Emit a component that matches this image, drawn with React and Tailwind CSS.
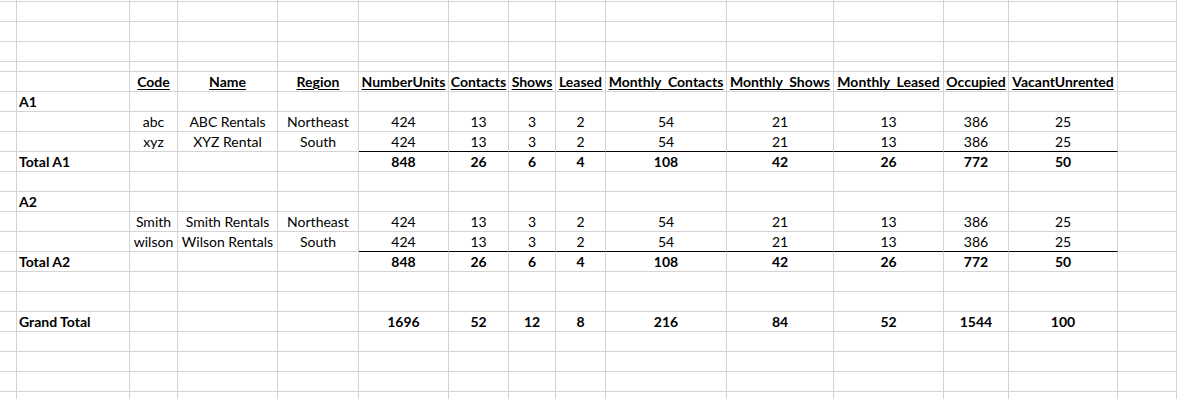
const GRID = 'grid grid-cols-[17px_113px_48px_100px_81px_90px_60px_47px_50px_121px_107px_110px_65px_109px_1fr]'

const HEAD = ['Code', 'Name', 'Region', 'NumberUnits', 'Contacts', 'Shows', 'Leased', 'Monthly  Contacts', 'Monthly  Shows', 'Monthly  Leased', 'Occupied', 'VacantUnrented']

// kind: blank | head | label | data | total
const ROWS = [
  { h: 'h-[2px]' },
  { h: 'h-[20px]' },
  { h: 'h-[20px]' },
  { h: 'h-[20px]' },
  { h: 'h-[10px]' },
  { h: 'h-[20px]', kind: 'head' },
  { h: 'h-[20px]', kind: 'label', label: 'A1' },
  { h: 'h-[20px]', kind: 'data', vals: ['abc', 'ABC Rentals', 'Northeast', 424, 13, 3, 2, 54, 21, 13, 386, 25] },
  { h: 'h-[20px]', kind: 'data', line: true, vals: ['xyz', 'XYZ Rental', 'South', 424, 13, 3, 2, 54, 21, 13, 386, 25] },
  { h: 'h-[20px]', kind: 'total', label: 'Total A1', vals: [848, 26, 6, 4, 108, 42, 26, 772, 50] },
  { h: 'h-[20px]' },
  { h: 'h-[20px]', kind: 'label', label: 'A2' },
  { h: 'h-[20px]', kind: 'data', vals: ['Smith', 'Smith Rentals', 'Northeast', 424, 13, 3, 2, 54, 21, 13, 386, 25] },
  { h: 'h-[20px]', kind: 'data', line: true, vals: ['wilson', 'Wilson Rentals', 'South', 424, 13, 3, 2, 54, 21, 13, 386, 25] },
  { h: 'h-[20px]', kind: 'total', label: 'Total A2', vals: [848, 26, 6, 4, 108, 42, 26, 772, 50] },
  { h: 'h-[20px]' },
  { h: 'h-[20px]' },
  { h: 'h-[20px]', kind: 'total', label: 'Grand Total', vals: [1696, 52, 12, 8, 216, 84, 52, 1544, 100] },
  { h: 'h-[20px]' },
  { h: 'h-[20px]' },
  { h: 'h-[20px]' },
  { h: 'h-[8px]', last: true },
]

function cellsFor(row) {
  const c = Array(15).fill(null)
  if (row.kind === 'head') {
    HEAD.forEach((t, i) => {
      c[i + 2] = <span className="font-bold underline underline-offset-[2px] decoration-1 whitespace-pre">{t}</span>
    })
  } else if (row.kind === 'label') {
    c[1] = <span className="font-bold">{row.label}</span>
  } else if (row.kind === 'data') {
    row.vals.forEach((v, i) => { c[i + 2] = <span>{v}</span> })
  } else if (row.kind === 'total') {
    c[1] = <span className="font-bold">{row.label}</span>
    row.vals.forEach((v, i) => { c[i + 5] = <span className="font-bold">{v}</span> })
  }
  return c
}

export default function App() {
  return (
    <div className="w-[1177px] h-[399px] overflow-hidden bg-white text-black text-[14px] leading-[19px] font-['Lato','Liberation_Sans',sans-serif]">
      {ROWS.map((row, r) => {
        const cells = cellsFor(row)
        return (
          <div key={r} className={`${GRID} ${row.h}`}>
            {cells.map((content, i) => {
              const black = row.line && i >= 5 && i <= 13
              return (
                <div
                  key={i}
                  className={`flex items-center whitespace-nowrap border-r border-[#d4d4d4] ${row.last ? '' : black ? 'border-b border-b-black' : 'border-b'} ${i === 1 ? 'justify-start pl-[2px] overflow-visible' : 'justify-center'}`}
                >
                  {content}
                </div>
              )
            })}
          </div>
        )
      })}
    </div>
  )
}
